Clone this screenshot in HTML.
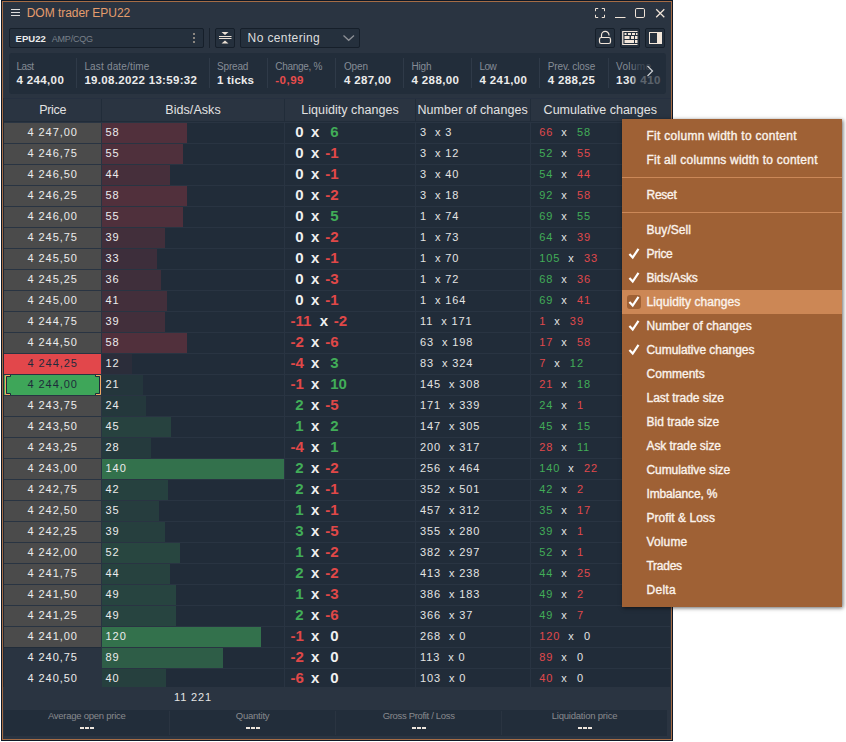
<!DOCTYPE html>
<html lang="en"><head><meta charset="utf-8"><title>DOM trader EPU22</title>
<style>
html,body{margin:0;padding:0;background:#fff;}
body{width:846px;height:742px;position:relative;overflow:hidden;font-family:'Liberation Sans', sans-serif;}
.g{position:absolute;left:0;top:0;}
.g>div,.g>span,.g>svg{position:absolute;display:block;}
.g>span{white-space:pre;}
</style></head><body>
<section class="g" id="frame">
<div style="left:1px;top:0px;width:672px;height:741px;background:#0f1826;"></div>
<div style="left:2px;top:1px;width:670px;height:739px;background:#a56c45;"></div>
<div style="left:3px;top:2px;width:668px;height:737px;background:#2a3441;"></div>
</section>
<section class="g" id="titlebar">
<div style="left:11px;top:9px;width:9px;height:1px;background:#dcdcdc;"></div>
<div style="left:11px;top:12px;width:9px;height:1px;background:#dcdcdc;"></div>
<div style="left:11px;top:15px;width:9px;height:1px;background:#dcdcdc;"></div>
<svg style="left:590px;top:4px" width="80" height="18" viewBox="590 4 80 18" fill="none" stroke="#f0e4d8" stroke-width="1">
<path d="M595.5 11.2V8.5H598.2 M601.8 8.5H604.5V11.2 M604.5 14.8V17.5H601.8 M598.2 17.5H595.5V14.8"/>
<path d="M615 17.5H625.5"/>
<rect x="635.5" y="8.5" width="9" height="9" rx="1.3"/>
<path d="M656.2 9.2L664.3 17.2M664.3 9.2L656.2 17.2" stroke-width="1.25"/>
</svg>
<span style="left:26.70px;top:7.20px;font:400 12px/12px 'Liberation Sans', sans-serif;color:#e59d6d;letter-spacing:-0.030px;">DOM trader EPU22</span>
</section>
<section class="g" id="toolbar">
<div style="left:9px;top:28px;width:195px;height:20px;background:#25303d;box-sizing:border-box;border:1px solid #161f2a;border-radius:2px;"></div>
<div style="left:193px;top:33px;width:2px;height:2px;background:#8b8680;"></div>
<div style="left:193px;top:37px;width:2px;height:2px;background:#8b8680;"></div>
<div style="left:193px;top:41px;width:2px;height:2px;background:#8b8680;"></div>
<div style="left:209px;top:28px;width:1px;height:20px;background:#1a232e;"></div>
<div style="left:215px;top:28px;width:20px;height:20px;background:#25303d;box-sizing:border-box;border:1px solid #161f2a;border-radius:2px;"></div>
<svg style="left:215px;top:28px" width="20" height="20" viewBox="215 28 20 20">
<path d="M221.5 32H228.5L225 35Z M221.5 43.5H228.5L225 40.5Z" fill="#eadfd4"/>
<path d="M219 36.5H231.5 M219 38.5H231.5" stroke="#eadfd4" stroke-width="1" fill="none"/>
</svg>
<div style="left:240px;top:28px;width:120px;height:20px;background:#25303d;box-sizing:border-box;border:1px solid #161f2a;border-radius:2px;"></div>
<svg style="left:340px;top:32px" width="18" height="12" viewBox="340 32 18 12"><path d="M343.5 35.5L348.7 40.3L354 35.5" stroke="#8d9096" stroke-width="1.3" fill="none"/></svg>
<div style="left:595px;top:28px;width:20px;height:20px;background:#25303d;box-sizing:border-box;border:1px solid #161f2a;border-radius:2px;"></div>
<div style="left:620px;top:28px;width:20px;height:20px;background:#25303d;box-sizing:border-box;border:1px solid #161f2a;border-radius:2px;"></div>
<div style="left:645px;top:28px;width:20px;height:20px;background:#25303d;box-sizing:border-box;border:1px solid #161f2a;border-radius:2px;"></div>
<svg style="left:595px;top:28px" width="70" height="20" viewBox="595 28 70 20" fill="none">
<rect x="599.5" y="37.5" width="11" height="6" rx="1.8" stroke="#f2e6da" stroke-width="1.2"/>
<path d="M601.5 37.5V35.2A3.75 3.75 0 0 1 609 35.2V35.6" stroke="#f2e6da" stroke-width="1.2"/>
<path d="M637.5 31.5H622.75V44.5H637.5" stroke="#f2e6da" stroke-width="1.2"/>
<path d="M624.5 33h2v2h-2z M628 33h3v2h-3z M632 33h3v2h-3z M636 33h1.5v2h-1.5z M624.5 36h5v3h-5z M631 36h3v3h-3z M635 36h2.5v3h-2.5z M624.5 40h9.5v3h-9.5z M635 40h2.5v3h-2.5z" fill="#f2e6da"/>
<rect x="649.5" y="32.5" width="12" height="11" stroke="#f2e6da"/>
<rect x="657" y="32" width="5" height="12" fill="#f2e6da"/>
</svg>
<span style="left:15.60px;top:34.00px;font:700 9.5px/9.5px 'Liberation Sans', sans-serif;color:#ececec;letter-spacing:0.023px;">EPU22</span>
<span style="left:51.70px;top:35.00px;font:400 9px/9px 'Liberation Sans', sans-serif;color:#79808a;letter-spacing:-0.186px;">AMP/CQG</span>
<span style="left:247.60px;top:32.00px;font:400 12px/12px 'Liberation Sans', sans-serif;color:#dedede;letter-spacing:0.378px;">No centering</span>
</section>
<section class="g" id="quote-info">
<div style="left:9px;top:53px;width:657px;height:41px;background:#222d3a;border-radius:3px;"></div>
<div style="left:76px;top:58px;width:1px;height:30px;background:#2f3a48;"></div>
<div style="left:209px;top:58px;width:1px;height:30px;background:#2f3a48;"></div>
<div style="left:267px;top:58px;width:1px;height:30px;background:#2f3a48;"></div>
<div style="left:335px;top:58px;width:1px;height:30px;background:#2f3a48;"></div>
<div style="left:403px;top:58px;width:1px;height:30px;background:#2f3a48;"></div>
<div style="left:471px;top:58px;width:1px;height:30px;background:#2f3a48;"></div>
<div style="left:539px;top:58px;width:1px;height:30px;background:#2f3a48;"></div>
<div style="left:608px;top:58px;width:1px;height:30px;background:#2f3a48;"></div>
<div style="left:630px;top:54px;width:36px;height:39px;background:linear-gradient(90deg,rgba(34,45,58,0) 0%,rgba(34,45,58,0.7) 25%,rgba(34,45,58,0.74) 100%);border-radius:0 3px 3px 0;z-index:3;"></div>
<svg style="left:644px;top:63px;z-index:4" width="12" height="16" viewBox="644 63 12 16"><path d="M647.5 66L652.5 71L647.5 76" stroke="#cfd2d6" stroke-width="1.2" fill="none"/></svg>
<span style="left:16.40px;top:62.00px;font:400 10px/10px 'Liberation Sans', sans-serif;color:#858c96;letter-spacing:-0.435px;">Last</span>
<span style="left:16.40px;top:75.00px;font:700 11.5px/11.5px 'Liberation Sans', sans-serif;color:#ececec;letter-spacing:0.376px;">4 244,00</span>
<span style="left:84.40px;top:62.00px;font:400 10px/10px 'Liberation Sans', sans-serif;color:#858c96;letter-spacing:0.168px;">Last date/time</span>
<span style="left:84.40px;top:75.00px;font:700 11.5px/11.5px 'Liberation Sans', sans-serif;color:#ececec;letter-spacing:0.322px;">19.08.2022 13:59:32</span>
<span style="left:217.00px;top:62.00px;font:400 10px/10px 'Liberation Sans', sans-serif;color:#858c96;letter-spacing:-0.170px;">Spread</span>
<span style="left:217.00px;top:75.00px;font:700 11.5px/11.5px 'Liberation Sans', sans-serif;color:#ececec;letter-spacing:0.198px;">1 ticks</span>
<span style="left:275.30px;top:62.00px;font:400 10px/10px 'Liberation Sans', sans-serif;color:#858c96;letter-spacing:-0.311px;">Change, %</span>
<span style="left:275.30px;top:75.00px;font:700 11.5px/11.5px 'Liberation Sans', sans-serif;color:#e84c4c;letter-spacing:0.495px;">-0,99</span>
<span style="left:344.00px;top:62.00px;font:400 10px/10px 'Liberation Sans', sans-serif;color:#858c96;letter-spacing:-0.156px;">Open</span>
<span style="left:344.00px;top:75.00px;font:700 11.5px/11.5px 'Liberation Sans', sans-serif;color:#ececec;letter-spacing:0.319px;">4 287,00</span>
<span style="left:411.50px;top:62.00px;font:400 10px/10px 'Liberation Sans', sans-serif;color:#858c96;letter-spacing:-0.193px;">High</span>
<span style="left:411.50px;top:75.00px;font:700 11.5px/11.5px 'Liberation Sans', sans-serif;color:#ececec;letter-spacing:0.376px;">4 288,00</span>
<span style="left:479.50px;top:62.00px;font:400 10px/10px 'Liberation Sans', sans-serif;color:#858c96;letter-spacing:-0.530px;">Low</span>
<span style="left:479.50px;top:75.00px;font:700 11.5px/11.5px 'Liberation Sans', sans-serif;color:#ececec;letter-spacing:0.376px;">4 241,00</span>
<span style="left:547.80px;top:62.00px;font:400 10px/10px 'Liberation Sans', sans-serif;color:#858c96;letter-spacing:-0.133px;">Prev. close</span>
<span style="left:547.80px;top:75.00px;font:700 11.5px/11.5px 'Liberation Sans', sans-serif;color:#ececec;letter-spacing:0.319px;">4 288,25</span>
<span style="left:616.00px;top:62.00px;font:400 10px/10px 'Liberation Sans', sans-serif;color:#858c96;letter-spacing:0.328px;">Volume</span>
<span style="left:616.00px;top:75.00px;font:700 11.5px/11.5px 'Liberation Sans', sans-serif;color:#ececec;letter-spacing:0.487px;">130 410</span>
</section>
<section class="g" id="dom-table">
<div style="left:3px;top:98px;width:668px;height:1px;background:#263040;"></div>
<div style="left:3px;top:121px;width:668px;height:1px;background:#212c39;"></div>
<div style="left:3px;top:122px;width:668px;height:1px;background:#293442;"></div>
<div style="left:101px;top:99px;width:1px;height:22px;background:#212c39;"></div>
<div style="left:284px;top:99px;width:1px;height:22px;background:#212c39;"></div>
<div style="left:415px;top:99px;width:1px;height:22px;background:#212c39;"></div>
<div style="left:530px;top:99px;width:1px;height:22px;background:#212c39;"></div>
<div style="left:3px;top:123px;width:667px;height:564px;background:#212c39;"></div>
<div style="left:4px;top:123px;width:97px;height:20px;background:#4b4b4b;"></div>
<div style="left:102px;top:123px;width:85px;height:20px;background:#51303c;"></div>
<div style="left:3px;top:143px;width:667px;height:1px;background:#293442;"></div>
<div style="left:4px;top:144px;width:97px;height:20px;background:#4b4b4b;"></div>
<div style="left:102px;top:144px;width:81px;height:20px;background:#4f303c;"></div>
<div style="left:3px;top:164px;width:667px;height:1px;background:#293442;"></div>
<div style="left:4px;top:165px;width:97px;height:20px;background:#4b4b4b;"></div>
<div style="left:102px;top:165px;width:68px;height:20px;background:#462f3b;"></div>
<div style="left:3px;top:185px;width:667px;height:1px;background:#293442;"></div>
<div style="left:4px;top:186px;width:97px;height:20px;background:#4b4b4b;"></div>
<div style="left:102px;top:186px;width:85px;height:20px;background:#51303c;"></div>
<div style="left:3px;top:206px;width:667px;height:1px;background:#293442;"></div>
<div style="left:4px;top:207px;width:97px;height:20px;background:#4b4b4b;"></div>
<div style="left:102px;top:207px;width:81px;height:20px;background:#4f303c;"></div>
<div style="left:3px;top:227px;width:667px;height:1px;background:#293442;"></div>
<div style="left:4px;top:228px;width:97px;height:20px;background:#4b4b4b;"></div>
<div style="left:102px;top:228px;width:63px;height:20px;background:#422f3b;"></div>
<div style="left:3px;top:248px;width:667px;height:1px;background:#293442;"></div>
<div style="left:4px;top:249px;width:97px;height:20px;background:#4b4b4b;"></div>
<div style="left:102px;top:249px;width:55px;height:20px;background:#3d2e3b;"></div>
<div style="left:3px;top:269px;width:667px;height:1px;background:#293442;"></div>
<div style="left:4px;top:270px;width:97px;height:20px;background:#4b4b4b;"></div>
<div style="left:102px;top:270px;width:59px;height:20px;background:#3f2f3b;"></div>
<div style="left:3px;top:290px;width:667px;height:1px;background:#293442;"></div>
<div style="left:4px;top:291px;width:97px;height:20px;background:#4b4b4b;"></div>
<div style="left:102px;top:291px;width:65px;height:20px;background:#432f3b;"></div>
<div style="left:3px;top:311px;width:667px;height:1px;background:#293442;"></div>
<div style="left:4px;top:312px;width:97px;height:20px;background:#4b4b4b;"></div>
<div style="left:102px;top:312px;width:63px;height:20px;background:#422f3b;"></div>
<div style="left:3px;top:332px;width:667px;height:1px;background:#293442;"></div>
<div style="left:4px;top:333px;width:97px;height:20px;background:#4b4b4b;"></div>
<div style="left:102px;top:333px;width:85px;height:20px;background:#51303c;"></div>
<div style="left:3px;top:353px;width:667px;height:1px;background:#293442;"></div>
<div style="left:4px;top:354px;width:97px;height:20px;background:#e2474b;"></div>
<div style="left:102px;top:354px;width:30px;height:20px;background:#2b2d3a;"></div>
<div style="left:3px;top:374px;width:667px;height:1px;background:#293442;"></div>
<div style="left:4px;top:375px;width:97px;height:20px;background:#3ea659;"></div>
<div style="left:102px;top:375px;width:41px;height:20px;background:#24363c;"></div>
<div style="left:3px;top:395px;width:667px;height:1px;background:#293442;"></div>
<div style="left:4px;top:396px;width:97px;height:20px;background:#4b4b4b;"></div>
<div style="left:102px;top:396px;width:44px;height:20px;background:#24383c;"></div>
<div style="left:3px;top:416px;width:667px;height:1px;background:#293442;"></div>
<div style="left:4px;top:417px;width:97px;height:20px;background:#4b4b4b;"></div>
<div style="left:102px;top:417px;width:69px;height:20px;background:#27423f;"></div>
<div style="left:3px;top:437px;width:667px;height:1px;background:#293442;"></div>
<div style="left:4px;top:438px;width:97px;height:20px;background:#4b4b4b;"></div>
<div style="left:102px;top:438px;width:49px;height:20px;background:#253a3d;"></div>
<div style="left:3px;top:458px;width:667px;height:1px;background:#293442;"></div>
<div style="left:4px;top:459px;width:97px;height:20px;background:#4b4b4b;"></div>
<div style="left:102px;top:459px;width:182px;height:20px;background:#33714c;"></div>
<div style="left:3px;top:479px;width:667px;height:1px;background:#293442;"></div>
<div style="left:4px;top:480px;width:97px;height:20px;background:#4b4b4b;"></div>
<div style="left:102px;top:480px;width:66px;height:20px;background:#26413f;"></div>
<div style="left:3px;top:500px;width:667px;height:1px;background:#293442;"></div>
<div style="left:4px;top:501px;width:97px;height:20px;background:#4b4b4b;"></div>
<div style="left:102px;top:501px;width:57px;height:20px;background:#263d3e;"></div>
<div style="left:3px;top:521px;width:667px;height:1px;background:#293442;"></div>
<div style="left:4px;top:522px;width:97px;height:20px;background:#4b4b4b;"></div>
<div style="left:102px;top:522px;width:63px;height:20px;background:#263f3e;"></div>
<div style="left:3px;top:542px;width:667px;height:1px;background:#293442;"></div>
<div style="left:4px;top:543px;width:97px;height:20px;background:#4b4b4b;"></div>
<div style="left:102px;top:543px;width:78px;height:20px;background:#284640;"></div>
<div style="left:3px;top:563px;width:667px;height:1px;background:#293442;"></div>
<div style="left:4px;top:564px;width:97px;height:20px;background:#4b4b4b;"></div>
<div style="left:102px;top:564px;width:68px;height:20px;background:#27423f;"></div>
<div style="left:3px;top:584px;width:667px;height:1px;background:#293442;"></div>
<div style="left:4px;top:585px;width:97px;height:20px;background:#4b4b4b;"></div>
<div style="left:102px;top:585px;width:74px;height:20px;background:#274440;"></div>
<div style="left:3px;top:605px;width:667px;height:1px;background:#293442;"></div>
<div style="left:4px;top:606px;width:97px;height:20px;background:#4b4b4b;"></div>
<div style="left:102px;top:606px;width:74px;height:20px;background:#274440;"></div>
<div style="left:3px;top:626px;width:667px;height:1px;background:#293442;"></div>
<div style="left:4px;top:627px;width:97px;height:20px;background:#4b4b4b;"></div>
<div style="left:102px;top:627px;width:159px;height:20px;background:#33714c;"></div>
<div style="left:102px;top:647px;width:568px;height:1px;background:#293442;"></div>
<div style="left:4px;top:648px;width:97px;height:21px;background:#2a3441;"></div>
<div style="left:102px;top:648px;width:121px;height:20px;background:#2e5d47;"></div>
<div style="left:102px;top:668px;width:568px;height:1px;background:#293442;"></div>
<div style="left:4px;top:669px;width:97px;height:18px;background:#2a3441;"></div>
<div style="left:102px;top:669px;width:64px;height:18px;background:#26403e;"></div>
<div style="left:3px;top:98px;width:1px;height:589px;background:#1f2a37;"></div>
<div style="left:101px;top:123px;width:1px;height:564px;background:#293442;"></div>
<div style="left:284px;top:123px;width:1px;height:564px;background:#293442;"></div>
<div style="left:415px;top:123px;width:1px;height:564px;background:#293442;"></div>
<div style="left:530px;top:123px;width:1px;height:564px;background:#293442;"></div>
<svg style="left:0px;top:375px" width="104" height="20" viewBox="0 0 104 20" fill="none" stroke-width="1"><path d="M10.5 0V1.5H6.5V18.5H10.5V20 M95.5 0V1.5H99.5V18.5H95.5V20" stroke="#1f2b3a"/><path d="M10 0.5H5.5V19.5H10 M96 0.5H100.5V19.5H96" stroke="#f4a866"/></svg>
<div style="left:3px;top:687px;width:668px;height:23px;background:#2a3441;"></div>
<span style="left:39.20px;top:104.20px;font:400 12.5px/12.5px 'Liberation Sans', sans-serif;color:#e2e2e2;letter-spacing:-0.321px;">Price</span>
<span style="left:165.30px;top:104.20px;font:400 12.5px/12.5px 'Liberation Sans', sans-serif;color:#e2e2e2;letter-spacing:0.064px;">Bids/Asks</span>
<span style="left:301.30px;top:104.20px;font:400 12.5px/12.5px 'Liberation Sans', sans-serif;color:#e2e2e2;letter-spacing:0.049px;">Liquidity changes</span>
<span style="left:417.50px;top:104.20px;font:400 12.5px/12.5px 'Liberation Sans', sans-serif;color:#e2e2e2;letter-spacing:0.069px;">Number of changes</span>
<span style="left:543.60px;top:104.20px;font:400 12.5px/12.5px 'Liberation Sans', sans-serif;color:#e2e2e2;letter-spacing:0.008px;">Cumulative changes</span>
<span style="left:27.50px;top:127.00px;font:400 11px/11px 'Liberation Sans', sans-serif;color:#ececec;letter-spacing:0.939px;">4 247,00</span>
<span style="left:105.60px;top:127.00px;font:400 11px/11px 'Liberation Sans', sans-serif;color:#ececec;letter-spacing:0.900px;">58</span>
<span style="left:291.20px;top:124.00px;font:700 15px/15px 'Liberation Sans', sans-serif;color:#f0f0f0;"> 0</span>
<span style="left:311.10px;top:124.00px;font:700 15px/15px 'Liberation Sans', sans-serif;color:#f0f0f0;">x</span>
<span style="left:326.00px;top:124.00px;font:700 15px/15px 'Liberation Sans', sans-serif;color:#41ad58;"> 6</span>
<span style="left:420.00px;top:127.00px;font:400 11px/11px 'Liberation Sans', sans-serif;color:#e4e4e4;letter-spacing:0.900px;">3  x 3</span>
<span style="left:539.30px;top:127.00px;font:400 11px/11px 'Liberation Sans', sans-serif;color:#e4e4e4;letter-spacing:0.900px;"><span style="color:#e0494c">66</span>  x  <span style="color:#41ad58;margin-left:1.3px">58</span></span>
<span style="left:27.50px;top:148.00px;font:400 11px/11px 'Liberation Sans', sans-serif;color:#ececec;letter-spacing:0.939px;">4 246,75</span>
<span style="left:105.60px;top:148.00px;font:400 11px/11px 'Liberation Sans', sans-serif;color:#ececec;letter-spacing:0.900px;">55</span>
<span style="left:291.20px;top:145.00px;font:700 15px/15px 'Liberation Sans', sans-serif;color:#f0f0f0;"> 0</span>
<span style="left:311.10px;top:145.00px;font:700 15px/15px 'Liberation Sans', sans-serif;color:#f0f0f0;">x</span>
<span style="left:325.20px;top:145.00px;font:700 15px/15px 'Liberation Sans', sans-serif;color:#e04848;">-1</span>
<span style="left:420.00px;top:148.00px;font:400 11px/11px 'Liberation Sans', sans-serif;color:#e4e4e4;letter-spacing:0.900px;">3  x 12</span>
<span style="left:539.30px;top:148.00px;font:400 11px/11px 'Liberation Sans', sans-serif;color:#e4e4e4;letter-spacing:0.900px;"><span style="color:#41ad58">52</span>  x  <span style="color:#e0494c;margin-left:1.3px">55</span></span>
<span style="left:27.50px;top:169.00px;font:400 11px/11px 'Liberation Sans', sans-serif;color:#ececec;letter-spacing:0.939px;">4 246,50</span>
<span style="left:105.60px;top:169.00px;font:400 11px/11px 'Liberation Sans', sans-serif;color:#ececec;letter-spacing:0.900px;">44</span>
<span style="left:291.20px;top:166.00px;font:700 15px/15px 'Liberation Sans', sans-serif;color:#f0f0f0;"> 0</span>
<span style="left:311.10px;top:166.00px;font:700 15px/15px 'Liberation Sans', sans-serif;color:#f0f0f0;">x</span>
<span style="left:325.20px;top:166.00px;font:700 15px/15px 'Liberation Sans', sans-serif;color:#e04848;">-1</span>
<span style="left:420.00px;top:169.00px;font:400 11px/11px 'Liberation Sans', sans-serif;color:#e4e4e4;letter-spacing:0.900px;">3  x 40</span>
<span style="left:539.30px;top:169.00px;font:400 11px/11px 'Liberation Sans', sans-serif;color:#e4e4e4;letter-spacing:0.900px;"><span style="color:#41ad58">54</span>  x  <span style="color:#e0494c;margin-left:1.3px">44</span></span>
<span style="left:27.50px;top:190.00px;font:400 11px/11px 'Liberation Sans', sans-serif;color:#ececec;letter-spacing:0.939px;">4 246,25</span>
<span style="left:105.60px;top:190.00px;font:400 11px/11px 'Liberation Sans', sans-serif;color:#ececec;letter-spacing:0.900px;">58</span>
<span style="left:291.20px;top:187.00px;font:700 15px/15px 'Liberation Sans', sans-serif;color:#f0f0f0;"> 0</span>
<span style="left:311.10px;top:187.00px;font:700 15px/15px 'Liberation Sans', sans-serif;color:#f0f0f0;">x</span>
<span style="left:325.20px;top:187.00px;font:700 15px/15px 'Liberation Sans', sans-serif;color:#e04848;">-2</span>
<span style="left:420.00px;top:190.00px;font:400 11px/11px 'Liberation Sans', sans-serif;color:#e4e4e4;letter-spacing:0.900px;">3  x 18</span>
<span style="left:539.30px;top:190.00px;font:400 11px/11px 'Liberation Sans', sans-serif;color:#e4e4e4;letter-spacing:0.900px;"><span style="color:#41ad58">92</span>  x  <span style="color:#e0494c;margin-left:1.3px">58</span></span>
<span style="left:27.50px;top:211.00px;font:400 11px/11px 'Liberation Sans', sans-serif;color:#ececec;letter-spacing:0.939px;">4 246,00</span>
<span style="left:105.60px;top:211.00px;font:400 11px/11px 'Liberation Sans', sans-serif;color:#ececec;letter-spacing:0.900px;">55</span>
<span style="left:291.20px;top:208.00px;font:700 15px/15px 'Liberation Sans', sans-serif;color:#f0f0f0;"> 0</span>
<span style="left:311.10px;top:208.00px;font:700 15px/15px 'Liberation Sans', sans-serif;color:#f0f0f0;">x</span>
<span style="left:326.00px;top:208.00px;font:700 15px/15px 'Liberation Sans', sans-serif;color:#41ad58;"> 5</span>
<span style="left:420.00px;top:211.00px;font:400 11px/11px 'Liberation Sans', sans-serif;color:#e4e4e4;letter-spacing:0.900px;">1  x 74</span>
<span style="left:539.30px;top:211.00px;font:400 11px/11px 'Liberation Sans', sans-serif;color:#e4e4e4;letter-spacing:0.900px;"><span style="color:#41ad58">69</span>  x  <span style="color:#41ad58;margin-left:1.3px">55</span></span>
<span style="left:27.50px;top:232.00px;font:400 11px/11px 'Liberation Sans', sans-serif;color:#ececec;letter-spacing:0.939px;">4 245,75</span>
<span style="left:105.60px;top:232.00px;font:400 11px/11px 'Liberation Sans', sans-serif;color:#ececec;letter-spacing:0.900px;">39</span>
<span style="left:291.20px;top:229.00px;font:700 15px/15px 'Liberation Sans', sans-serif;color:#f0f0f0;"> 0</span>
<span style="left:311.10px;top:229.00px;font:700 15px/15px 'Liberation Sans', sans-serif;color:#f0f0f0;">x</span>
<span style="left:325.20px;top:229.00px;font:700 15px/15px 'Liberation Sans', sans-serif;color:#e04848;">-2</span>
<span style="left:420.00px;top:232.00px;font:400 11px/11px 'Liberation Sans', sans-serif;color:#e4e4e4;letter-spacing:0.900px;">1  x 73</span>
<span style="left:539.30px;top:232.00px;font:400 11px/11px 'Liberation Sans', sans-serif;color:#e4e4e4;letter-spacing:0.900px;"><span style="color:#41ad58">64</span>  x  <span style="color:#e0494c;margin-left:1.3px">39</span></span>
<span style="left:27.50px;top:253.00px;font:400 11px/11px 'Liberation Sans', sans-serif;color:#ececec;letter-spacing:0.939px;">4 245,50</span>
<span style="left:105.60px;top:253.00px;font:400 11px/11px 'Liberation Sans', sans-serif;color:#ececec;letter-spacing:0.900px;">33</span>
<span style="left:291.20px;top:250.00px;font:700 15px/15px 'Liberation Sans', sans-serif;color:#f0f0f0;"> 0</span>
<span style="left:311.10px;top:250.00px;font:700 15px/15px 'Liberation Sans', sans-serif;color:#f0f0f0;">x</span>
<span style="left:325.20px;top:250.00px;font:700 15px/15px 'Liberation Sans', sans-serif;color:#e04848;">-1</span>
<span style="left:420.00px;top:253.00px;font:400 11px/11px 'Liberation Sans', sans-serif;color:#e4e4e4;letter-spacing:0.900px;">1  x 70</span>
<span style="left:539.30px;top:253.00px;font:400 11px/11px 'Liberation Sans', sans-serif;color:#e4e4e4;letter-spacing:0.900px;"><span style="color:#41ad58">105</span>  x  <span style="color:#e0494c;margin-left:1.3px">33</span></span>
<span style="left:27.50px;top:274.00px;font:400 11px/11px 'Liberation Sans', sans-serif;color:#ececec;letter-spacing:0.939px;">4 245,25</span>
<span style="left:105.60px;top:274.00px;font:400 11px/11px 'Liberation Sans', sans-serif;color:#ececec;letter-spacing:0.900px;">36</span>
<span style="left:291.20px;top:271.00px;font:700 15px/15px 'Liberation Sans', sans-serif;color:#f0f0f0;"> 0</span>
<span style="left:311.10px;top:271.00px;font:700 15px/15px 'Liberation Sans', sans-serif;color:#f0f0f0;">x</span>
<span style="left:325.20px;top:271.00px;font:700 15px/15px 'Liberation Sans', sans-serif;color:#e04848;">-3</span>
<span style="left:420.00px;top:274.00px;font:400 11px/11px 'Liberation Sans', sans-serif;color:#e4e4e4;letter-spacing:0.900px;">1  x 72</span>
<span style="left:539.30px;top:274.00px;font:400 11px/11px 'Liberation Sans', sans-serif;color:#e4e4e4;letter-spacing:0.900px;"><span style="color:#41ad58">68</span>  x  <span style="color:#e0494c;margin-left:1.3px">36</span></span>
<span style="left:27.50px;top:295.00px;font:400 11px/11px 'Liberation Sans', sans-serif;color:#ececec;letter-spacing:0.939px;">4 245,00</span>
<span style="left:105.60px;top:295.00px;font:400 11px/11px 'Liberation Sans', sans-serif;color:#ececec;letter-spacing:0.900px;">41</span>
<span style="left:291.20px;top:292.00px;font:700 15px/15px 'Liberation Sans', sans-serif;color:#f0f0f0;"> 0</span>
<span style="left:311.10px;top:292.00px;font:700 15px/15px 'Liberation Sans', sans-serif;color:#f0f0f0;">x</span>
<span style="left:325.20px;top:292.00px;font:700 15px/15px 'Liberation Sans', sans-serif;color:#e04848;">-1</span>
<span style="left:420.00px;top:295.00px;font:400 11px/11px 'Liberation Sans', sans-serif;color:#e4e4e4;letter-spacing:0.900px;">1  x 164</span>
<span style="left:539.30px;top:295.00px;font:400 11px/11px 'Liberation Sans', sans-serif;color:#e4e4e4;letter-spacing:0.900px;"><span style="color:#41ad58">69</span>  x  <span style="color:#e0494c;margin-left:1.3px">41</span></span>
<span style="left:27.50px;top:316.00px;font:400 11px/11px 'Liberation Sans', sans-serif;color:#ececec;letter-spacing:0.939px;">4 244,75</span>
<span style="left:105.60px;top:316.00px;font:400 11px/11px 'Liberation Sans', sans-serif;color:#ececec;letter-spacing:0.900px;">39</span>
<span style="left:290.40px;top:313.00px;font:700 15px/15px 'Liberation Sans', sans-serif;color:#e04848;">-11</span>
<span style="left:319.70px;top:313.00px;font:700 15px/15px 'Liberation Sans', sans-serif;color:#f0f0f0;">x</span>
<span style="left:333.80px;top:313.00px;font:700 15px/15px 'Liberation Sans', sans-serif;color:#e04848;">-2</span>
<span style="left:420.00px;top:316.00px;font:400 11px/11px 'Liberation Sans', sans-serif;color:#e4e4e4;letter-spacing:0.900px;">11  x 171</span>
<span style="left:539.30px;top:316.00px;font:400 11px/11px 'Liberation Sans', sans-serif;color:#e4e4e4;letter-spacing:0.900px;"><span style="color:#e0494c">1</span>  x  <span style="color:#e0494c;margin-left:1.3px">39</span></span>
<span style="left:27.50px;top:337.00px;font:400 11px/11px 'Liberation Sans', sans-serif;color:#ececec;letter-spacing:0.939px;">4 244,50</span>
<span style="left:105.60px;top:337.00px;font:400 11px/11px 'Liberation Sans', sans-serif;color:#ececec;letter-spacing:0.900px;">58</span>
<span style="left:290.40px;top:334.00px;font:700 15px/15px 'Liberation Sans', sans-serif;color:#e04848;">-2</span>
<span style="left:311.10px;top:334.00px;font:700 15px/15px 'Liberation Sans', sans-serif;color:#f0f0f0;">x</span>
<span style="left:325.20px;top:334.00px;font:700 15px/15px 'Liberation Sans', sans-serif;color:#e04848;">-6</span>
<span style="left:420.00px;top:337.00px;font:400 11px/11px 'Liberation Sans', sans-serif;color:#e4e4e4;letter-spacing:0.900px;">63  x 198</span>
<span style="left:539.30px;top:337.00px;font:400 11px/11px 'Liberation Sans', sans-serif;color:#e4e4e4;letter-spacing:0.900px;"><span style="color:#e0494c">17</span>  x  <span style="color:#e0494c;margin-left:1.3px">58</span></span>
<span style="left:27.50px;top:358.00px;font:400 11px/11px 'Liberation Sans', sans-serif;color:#1e2b3b;letter-spacing:0.939px;">4 244,25</span>
<span style="left:105.60px;top:358.00px;font:400 11px/11px 'Liberation Sans', sans-serif;color:#ececec;letter-spacing:0.900px;">12</span>
<span style="left:290.40px;top:355.00px;font:700 15px/15px 'Liberation Sans', sans-serif;color:#e04848;">-4</span>
<span style="left:311.10px;top:355.00px;font:700 15px/15px 'Liberation Sans', sans-serif;color:#f0f0f0;">x</span>
<span style="left:326.00px;top:355.00px;font:700 15px/15px 'Liberation Sans', sans-serif;color:#41ad58;"> 3</span>
<span style="left:420.00px;top:358.00px;font:400 11px/11px 'Liberation Sans', sans-serif;color:#e4e4e4;letter-spacing:0.900px;">83  x 324</span>
<span style="left:539.30px;top:358.00px;font:400 11px/11px 'Liberation Sans', sans-serif;color:#e4e4e4;letter-spacing:0.900px;"><span style="color:#e0494c">7</span>  x  <span style="color:#41ad58;margin-left:1.3px">12</span></span>
<span style="left:27.50px;top:379.00px;font:400 11px/11px 'Liberation Sans', sans-serif;color:#1e2b3b;letter-spacing:0.939px;">4 244,00</span>
<span style="left:105.60px;top:379.00px;font:400 11px/11px 'Liberation Sans', sans-serif;color:#ececec;letter-spacing:0.900px;">21</span>
<span style="left:290.40px;top:376.00px;font:700 15px/15px 'Liberation Sans', sans-serif;color:#e04848;">-1</span>
<span style="left:311.10px;top:376.00px;font:700 15px/15px 'Liberation Sans', sans-serif;color:#f0f0f0;">x</span>
<span style="left:326.00px;top:376.00px;font:700 15px/15px 'Liberation Sans', sans-serif;color:#41ad58;"> 10</span>
<span style="left:420.00px;top:379.00px;font:400 11px/11px 'Liberation Sans', sans-serif;color:#e4e4e4;letter-spacing:0.900px;">145  x 308</span>
<span style="left:539.30px;top:379.00px;font:400 11px/11px 'Liberation Sans', sans-serif;color:#e4e4e4;letter-spacing:0.900px;"><span style="color:#e0494c">21</span>  x  <span style="color:#41ad58;margin-left:1.3px">18</span></span>
<span style="left:27.50px;top:400.00px;font:400 11px/11px 'Liberation Sans', sans-serif;color:#ececec;letter-spacing:0.939px;">4 243,75</span>
<span style="left:105.60px;top:400.00px;font:400 11px/11px 'Liberation Sans', sans-serif;color:#ececec;letter-spacing:0.900px;">24</span>
<span style="left:291.20px;top:397.00px;font:700 15px/15px 'Liberation Sans', sans-serif;color:#41ad58;"> 2</span>
<span style="left:311.10px;top:397.00px;font:700 15px/15px 'Liberation Sans', sans-serif;color:#f0f0f0;">x</span>
<span style="left:325.20px;top:397.00px;font:700 15px/15px 'Liberation Sans', sans-serif;color:#e04848;">-5</span>
<span style="left:420.00px;top:400.00px;font:400 11px/11px 'Liberation Sans', sans-serif;color:#e4e4e4;letter-spacing:0.900px;">171  x 339</span>
<span style="left:539.30px;top:400.00px;font:400 11px/11px 'Liberation Sans', sans-serif;color:#e4e4e4;letter-spacing:0.900px;"><span style="color:#41ad58">24</span>  x  <span style="color:#e0494c;margin-left:1.3px">1</span></span>
<span style="left:27.50px;top:421.00px;font:400 11px/11px 'Liberation Sans', sans-serif;color:#ececec;letter-spacing:0.939px;">4 243,50</span>
<span style="left:105.60px;top:421.00px;font:400 11px/11px 'Liberation Sans', sans-serif;color:#ececec;letter-spacing:0.900px;">45</span>
<span style="left:291.20px;top:418.00px;font:700 15px/15px 'Liberation Sans', sans-serif;color:#41ad58;"> 1</span>
<span style="left:311.10px;top:418.00px;font:700 15px/15px 'Liberation Sans', sans-serif;color:#f0f0f0;">x</span>
<span style="left:326.00px;top:418.00px;font:700 15px/15px 'Liberation Sans', sans-serif;color:#41ad58;"> 2</span>
<span style="left:420.00px;top:421.00px;font:400 11px/11px 'Liberation Sans', sans-serif;color:#e4e4e4;letter-spacing:0.900px;">147  x 305</span>
<span style="left:539.30px;top:421.00px;font:400 11px/11px 'Liberation Sans', sans-serif;color:#e4e4e4;letter-spacing:0.900px;"><span style="color:#41ad58">45</span>  x  <span style="color:#41ad58;margin-left:1.3px">15</span></span>
<span style="left:27.50px;top:442.00px;font:400 11px/11px 'Liberation Sans', sans-serif;color:#ececec;letter-spacing:0.939px;">4 243,25</span>
<span style="left:105.60px;top:442.00px;font:400 11px/11px 'Liberation Sans', sans-serif;color:#ececec;letter-spacing:0.900px;">28</span>
<span style="left:290.40px;top:439.00px;font:700 15px/15px 'Liberation Sans', sans-serif;color:#e04848;">-4</span>
<span style="left:311.10px;top:439.00px;font:700 15px/15px 'Liberation Sans', sans-serif;color:#f0f0f0;">x</span>
<span style="left:326.00px;top:439.00px;font:700 15px/15px 'Liberation Sans', sans-serif;color:#41ad58;"> 1</span>
<span style="left:420.00px;top:442.00px;font:400 11px/11px 'Liberation Sans', sans-serif;color:#e4e4e4;letter-spacing:0.900px;">200  x 317</span>
<span style="left:539.30px;top:442.00px;font:400 11px/11px 'Liberation Sans', sans-serif;color:#e4e4e4;letter-spacing:0.900px;"><span style="color:#e0494c">28</span>  x  <span style="color:#41ad58;margin-left:1.3px">11</span></span>
<span style="left:27.50px;top:463.00px;font:400 11px/11px 'Liberation Sans', sans-serif;color:#ececec;letter-spacing:0.939px;">4 243,00</span>
<span style="left:105.60px;top:463.00px;font:400 11px/11px 'Liberation Sans', sans-serif;color:#ececec;letter-spacing:0.900px;">140</span>
<span style="left:291.20px;top:460.00px;font:700 15px/15px 'Liberation Sans', sans-serif;color:#41ad58;"> 2</span>
<span style="left:311.10px;top:460.00px;font:700 15px/15px 'Liberation Sans', sans-serif;color:#f0f0f0;">x</span>
<span style="left:325.20px;top:460.00px;font:700 15px/15px 'Liberation Sans', sans-serif;color:#e04848;">-2</span>
<span style="left:420.00px;top:463.00px;font:400 11px/11px 'Liberation Sans', sans-serif;color:#e4e4e4;letter-spacing:0.900px;">256  x 464</span>
<span style="left:539.30px;top:463.00px;font:400 11px/11px 'Liberation Sans', sans-serif;color:#e4e4e4;letter-spacing:0.900px;"><span style="color:#41ad58">140</span>  x  <span style="color:#e0494c;margin-left:1.3px">22</span></span>
<span style="left:27.50px;top:484.00px;font:400 11px/11px 'Liberation Sans', sans-serif;color:#ececec;letter-spacing:0.939px;">4 242,75</span>
<span style="left:105.60px;top:484.00px;font:400 11px/11px 'Liberation Sans', sans-serif;color:#ececec;letter-spacing:0.900px;">42</span>
<span style="left:291.20px;top:481.00px;font:700 15px/15px 'Liberation Sans', sans-serif;color:#41ad58;"> 2</span>
<span style="left:311.10px;top:481.00px;font:700 15px/15px 'Liberation Sans', sans-serif;color:#f0f0f0;">x</span>
<span style="left:325.20px;top:481.00px;font:700 15px/15px 'Liberation Sans', sans-serif;color:#e04848;">-1</span>
<span style="left:420.00px;top:484.00px;font:400 11px/11px 'Liberation Sans', sans-serif;color:#e4e4e4;letter-spacing:0.900px;">352  x 501</span>
<span style="left:539.30px;top:484.00px;font:400 11px/11px 'Liberation Sans', sans-serif;color:#e4e4e4;letter-spacing:0.900px;"><span style="color:#41ad58">42</span>  x  <span style="color:#e0494c;margin-left:1.3px">2</span></span>
<span style="left:27.50px;top:505.00px;font:400 11px/11px 'Liberation Sans', sans-serif;color:#ececec;letter-spacing:0.939px;">4 242,50</span>
<span style="left:105.60px;top:505.00px;font:400 11px/11px 'Liberation Sans', sans-serif;color:#ececec;letter-spacing:0.900px;">35</span>
<span style="left:291.20px;top:502.00px;font:700 15px/15px 'Liberation Sans', sans-serif;color:#41ad58;"> 1</span>
<span style="left:311.10px;top:502.00px;font:700 15px/15px 'Liberation Sans', sans-serif;color:#f0f0f0;">x</span>
<span style="left:325.20px;top:502.00px;font:700 15px/15px 'Liberation Sans', sans-serif;color:#e04848;">-1</span>
<span style="left:420.00px;top:505.00px;font:400 11px/11px 'Liberation Sans', sans-serif;color:#e4e4e4;letter-spacing:0.900px;">457  x 312</span>
<span style="left:539.30px;top:505.00px;font:400 11px/11px 'Liberation Sans', sans-serif;color:#e4e4e4;letter-spacing:0.900px;"><span style="color:#41ad58">35</span>  x  <span style="color:#e0494c;margin-left:1.3px">17</span></span>
<span style="left:27.50px;top:526.00px;font:400 11px/11px 'Liberation Sans', sans-serif;color:#ececec;letter-spacing:0.939px;">4 242,25</span>
<span style="left:105.60px;top:526.00px;font:400 11px/11px 'Liberation Sans', sans-serif;color:#ececec;letter-spacing:0.900px;">39</span>
<span style="left:291.20px;top:523.00px;font:700 15px/15px 'Liberation Sans', sans-serif;color:#41ad58;"> 3</span>
<span style="left:311.10px;top:523.00px;font:700 15px/15px 'Liberation Sans', sans-serif;color:#f0f0f0;">x</span>
<span style="left:325.20px;top:523.00px;font:700 15px/15px 'Liberation Sans', sans-serif;color:#e04848;">-5</span>
<span style="left:420.00px;top:526.00px;font:400 11px/11px 'Liberation Sans', sans-serif;color:#e4e4e4;letter-spacing:0.900px;">355  x 280</span>
<span style="left:539.30px;top:526.00px;font:400 11px/11px 'Liberation Sans', sans-serif;color:#e4e4e4;letter-spacing:0.900px;"><span style="color:#41ad58">39</span>  x  <span style="color:#e0494c;margin-left:1.3px">1</span></span>
<span style="left:27.50px;top:547.00px;font:400 11px/11px 'Liberation Sans', sans-serif;color:#ececec;letter-spacing:0.939px;">4 242,00</span>
<span style="left:105.60px;top:547.00px;font:400 11px/11px 'Liberation Sans', sans-serif;color:#ececec;letter-spacing:0.900px;">52</span>
<span style="left:291.20px;top:544.00px;font:700 15px/15px 'Liberation Sans', sans-serif;color:#41ad58;"> 1</span>
<span style="left:311.10px;top:544.00px;font:700 15px/15px 'Liberation Sans', sans-serif;color:#f0f0f0;">x</span>
<span style="left:325.20px;top:544.00px;font:700 15px/15px 'Liberation Sans', sans-serif;color:#e04848;">-2</span>
<span style="left:420.00px;top:547.00px;font:400 11px/11px 'Liberation Sans', sans-serif;color:#e4e4e4;letter-spacing:0.900px;">382  x 297</span>
<span style="left:539.30px;top:547.00px;font:400 11px/11px 'Liberation Sans', sans-serif;color:#e4e4e4;letter-spacing:0.900px;"><span style="color:#41ad58">52</span>  x  <span style="color:#e0494c;margin-left:1.3px">1</span></span>
<span style="left:27.50px;top:568.00px;font:400 11px/11px 'Liberation Sans', sans-serif;color:#ececec;letter-spacing:0.939px;">4 241,75</span>
<span style="left:105.60px;top:568.00px;font:400 11px/11px 'Liberation Sans', sans-serif;color:#ececec;letter-spacing:0.900px;">44</span>
<span style="left:291.20px;top:565.00px;font:700 15px/15px 'Liberation Sans', sans-serif;color:#41ad58;"> 2</span>
<span style="left:311.10px;top:565.00px;font:700 15px/15px 'Liberation Sans', sans-serif;color:#f0f0f0;">x</span>
<span style="left:325.20px;top:565.00px;font:700 15px/15px 'Liberation Sans', sans-serif;color:#e04848;">-2</span>
<span style="left:420.00px;top:568.00px;font:400 11px/11px 'Liberation Sans', sans-serif;color:#e4e4e4;letter-spacing:0.900px;">413  x 238</span>
<span style="left:539.30px;top:568.00px;font:400 11px/11px 'Liberation Sans', sans-serif;color:#e4e4e4;letter-spacing:0.900px;"><span style="color:#41ad58">44</span>  x  <span style="color:#e0494c;margin-left:1.3px">25</span></span>
<span style="left:27.50px;top:589.00px;font:400 11px/11px 'Liberation Sans', sans-serif;color:#ececec;letter-spacing:0.939px;">4 241,50</span>
<span style="left:105.60px;top:589.00px;font:400 11px/11px 'Liberation Sans', sans-serif;color:#ececec;letter-spacing:0.900px;">49</span>
<span style="left:291.20px;top:586.00px;font:700 15px/15px 'Liberation Sans', sans-serif;color:#41ad58;"> 1</span>
<span style="left:311.10px;top:586.00px;font:700 15px/15px 'Liberation Sans', sans-serif;color:#f0f0f0;">x</span>
<span style="left:325.20px;top:586.00px;font:700 15px/15px 'Liberation Sans', sans-serif;color:#e04848;">-3</span>
<span style="left:420.00px;top:589.00px;font:400 11px/11px 'Liberation Sans', sans-serif;color:#e4e4e4;letter-spacing:0.900px;">386  x 183</span>
<span style="left:539.30px;top:589.00px;font:400 11px/11px 'Liberation Sans', sans-serif;color:#e4e4e4;letter-spacing:0.900px;"><span style="color:#41ad58">49</span>  x  <span style="color:#e0494c;margin-left:1.3px">2</span></span>
<span style="left:27.50px;top:610.00px;font:400 11px/11px 'Liberation Sans', sans-serif;color:#ececec;letter-spacing:0.939px;">4 241,25</span>
<span style="left:105.60px;top:610.00px;font:400 11px/11px 'Liberation Sans', sans-serif;color:#ececec;letter-spacing:0.900px;">49</span>
<span style="left:291.20px;top:607.00px;font:700 15px/15px 'Liberation Sans', sans-serif;color:#41ad58;"> 2</span>
<span style="left:311.10px;top:607.00px;font:700 15px/15px 'Liberation Sans', sans-serif;color:#f0f0f0;">x</span>
<span style="left:325.20px;top:607.00px;font:700 15px/15px 'Liberation Sans', sans-serif;color:#e04848;">-6</span>
<span style="left:420.00px;top:610.00px;font:400 11px/11px 'Liberation Sans', sans-serif;color:#e4e4e4;letter-spacing:0.900px;">366  x 37</span>
<span style="left:539.30px;top:610.00px;font:400 11px/11px 'Liberation Sans', sans-serif;color:#e4e4e4;letter-spacing:0.900px;"><span style="color:#41ad58">49</span>  x  <span style="color:#e0494c;margin-left:1.3px">7</span></span>
<span style="left:27.50px;top:631.00px;font:400 11px/11px 'Liberation Sans', sans-serif;color:#ececec;letter-spacing:0.939px;">4 241,00</span>
<span style="left:105.60px;top:631.00px;font:400 11px/11px 'Liberation Sans', sans-serif;color:#ececec;letter-spacing:0.900px;">120</span>
<span style="left:290.40px;top:628.00px;font:700 15px/15px 'Liberation Sans', sans-serif;color:#e04848;">-1</span>
<span style="left:311.10px;top:628.00px;font:700 15px/15px 'Liberation Sans', sans-serif;color:#f0f0f0;">x</span>
<span style="left:326.00px;top:628.00px;font:700 15px/15px 'Liberation Sans', sans-serif;color:#f0f0f0;"> 0</span>
<span style="left:420.00px;top:631.00px;font:400 11px/11px 'Liberation Sans', sans-serif;color:#e4e4e4;letter-spacing:0.900px;">268  x 0</span>
<span style="left:539.30px;top:631.00px;font:400 11px/11px 'Liberation Sans', sans-serif;color:#e4e4e4;letter-spacing:0.900px;"><span style="color:#e0494c">120</span>  x  <span style="color:#e4e4e4;margin-left:1.3px">0</span></span>
<span style="left:27.50px;top:652.00px;font:400 11px/11px 'Liberation Sans', sans-serif;color:#ececec;letter-spacing:0.939px;">4 240,75</span>
<span style="left:105.60px;top:652.00px;font:400 11px/11px 'Liberation Sans', sans-serif;color:#ececec;letter-spacing:0.900px;">89</span>
<span style="left:290.40px;top:649.00px;font:700 15px/15px 'Liberation Sans', sans-serif;color:#e04848;">-2</span>
<span style="left:311.10px;top:649.00px;font:700 15px/15px 'Liberation Sans', sans-serif;color:#f0f0f0;">x</span>
<span style="left:326.00px;top:649.00px;font:700 15px/15px 'Liberation Sans', sans-serif;color:#f0f0f0;"> 0</span>
<span style="left:420.00px;top:652.00px;font:400 11px/11px 'Liberation Sans', sans-serif;color:#e4e4e4;letter-spacing:0.900px;">113  x 0</span>
<span style="left:539.30px;top:652.00px;font:400 11px/11px 'Liberation Sans', sans-serif;color:#e4e4e4;letter-spacing:0.900px;"><span style="color:#e0494c">89</span>  x  <span style="color:#e4e4e4;margin-left:1.3px">0</span></span>
<span style="left:27.50px;top:673.00px;font:400 11px/11px 'Liberation Sans', sans-serif;color:#ececec;letter-spacing:0.939px;">4 240,50</span>
<span style="left:105.60px;top:673.00px;font:400 11px/11px 'Liberation Sans', sans-serif;color:#ececec;letter-spacing:0.900px;">40</span>
<span style="left:290.40px;top:670.00px;font:700 15px/15px 'Liberation Sans', sans-serif;color:#e04848;">-6</span>
<span style="left:311.10px;top:670.00px;font:700 15px/15px 'Liberation Sans', sans-serif;color:#f0f0f0;">x</span>
<span style="left:326.00px;top:670.00px;font:700 15px/15px 'Liberation Sans', sans-serif;color:#f0f0f0;"> 0</span>
<span style="left:420.00px;top:673.00px;font:400 11px/11px 'Liberation Sans', sans-serif;color:#e4e4e4;letter-spacing:0.900px;">103  x 0</span>
<span style="left:539.30px;top:673.00px;font:400 11px/11px 'Liberation Sans', sans-serif;color:#e4e4e4;letter-spacing:0.900px;"><span style="color:#e0494c">40</span>  x  <span style="color:#e4e4e4;margin-left:1.3px">0</span></span>
<span style="left:174.00px;top:692.00px;font:400 11px/11px 'Liberation Sans', sans-serif;color:#e4e4e4;letter-spacing:0.874px;">11 221</span>
</section>
<section class="g" id="position-panel">
<div style="left:4px;top:710px;width:663px;height:26px;background:#222d3a;"></div>
<div style="left:169px;top:711px;width:1px;height:24px;background:#2a3441;"></div>
<div style="left:335px;top:711px;width:1px;height:24px;background:#2a3441;"></div>
<div style="left:501px;top:711px;width:1px;height:24px;background:#2a3441;"></div>
<div style="left:80px;top:727px;width:4px;height:2px;background:#ece4dc;"></div>
<div style="left:85px;top:727px;width:4px;height:2px;background:#ece4dc;"></div>
<div style="left:90px;top:727px;width:4px;height:2px;background:#ece4dc;"></div>
<div style="left:246px;top:727px;width:4px;height:2px;background:#ece4dc;"></div>
<div style="left:251px;top:727px;width:4px;height:2px;background:#ece4dc;"></div>
<div style="left:256px;top:727px;width:4px;height:2px;background:#ece4dc;"></div>
<div style="left:412px;top:727px;width:4px;height:2px;background:#ece4dc;"></div>
<div style="left:417px;top:727px;width:4px;height:2px;background:#ece4dc;"></div>
<div style="left:422px;top:727px;width:4px;height:2px;background:#ece4dc;"></div>
<div style="left:578px;top:727px;width:4px;height:2px;background:#ece4dc;"></div>
<div style="left:583px;top:727px;width:4px;height:2px;background:#ece4dc;"></div>
<div style="left:588px;top:727px;width:4px;height:2px;background:#ece4dc;"></div>
<span style="left:47.90px;top:711.00px;font:400 9.5px/9.5px 'Liberation Sans', sans-serif;color:#888a8e;letter-spacing:-0.248px;">Average open price</span>
<span style="left:235.85px;top:711.00px;font:400 9.5px/9.5px 'Liberation Sans', sans-serif;color:#888a8e;letter-spacing:-0.242px;">Quantity</span>
<span style="left:382.65px;top:711.00px;font:400 9.5px/9.5px 'Liberation Sans', sans-serif;color:#888a8e;letter-spacing:-0.324px;">Gross Profit / Loss</span>
<span style="left:551.75px;top:711.00px;font:400 9.5px/9.5px 'Liberation Sans', sans-serif;color:#888a8e;letter-spacing:-0.218px;">Liquidation price</span>
</section>
<section class="g" id="context-menu">
<div style="left:622px;top:119px;width:220px;height:488px;background:#9f6135;box-shadow:0.5px 0.5px 4px rgba(0,0,0,0.6);"></div>
<div style="left:622px;top:177px;width:220px;height:1px;background:#cb8858;"></div>
<div style="left:622px;top:212px;width:220px;height:1px;background:#cb8858;"></div>
<div style="left:622px;top:290px;width:220px;height:24px;background:#cc8755;"></div>
<div style="left:627px;top:295px;width:14px;height:14px;background:#9f6135;border-radius:3px;"></div>
<svg style="left:627px;top:247px" width="14" height="14" viewBox="0 0 14 14"><path d="M2.4 6.9L5.7 10.5L11.5 1.8" stroke="#fff" stroke-width="2.2" fill="none"/></svg>
<svg style="left:627px;top:271px" width="14" height="14" viewBox="0 0 14 14"><path d="M2.4 6.9L5.7 10.5L11.5 1.8" stroke="#fff" stroke-width="2.2" fill="none"/></svg>
<svg style="left:627px;top:295px" width="14" height="14" viewBox="0 0 14 14"><path d="M2.4 6.9L5.7 10.5L11.5 1.8" stroke="#fff" stroke-width="2.2" fill="none"/></svg>
<svg style="left:627px;top:319px" width="14" height="14" viewBox="0 0 14 14"><path d="M2.4 6.9L5.7 10.5L11.5 1.8" stroke="#fff" stroke-width="2.2" fill="none"/></svg>
<svg style="left:627px;top:343px" width="14" height="14" viewBox="0 0 14 14"><path d="M2.4 6.9L5.7 10.5L11.5 1.8" stroke="#fff" stroke-width="2.2" fill="none"/></svg>
<span style="left:646.50px;top:129.60px;font:400 12px/12px 'Liberation Sans', sans-serif;color:#fbf3ec;letter-spacing:0.279px;-webkit-text-stroke:0.35px #fbf3ec;">Fit column width to content</span>
<span style="left:646.50px;top:153.60px;font:400 12px/12px 'Liberation Sans', sans-serif;color:#fbf3ec;letter-spacing:0.223px;-webkit-text-stroke:0.35px #fbf3ec;">Fit all columns width to content</span>
<span style="left:646.50px;top:188.60px;font:400 12px/12px 'Liberation Sans', sans-serif;color:#fbf3ec;letter-spacing:-0.240px;-webkit-text-stroke:0.35px #fbf3ec;">Reset</span>
<span style="left:646.50px;top:223.60px;font:400 12px/12px 'Liberation Sans', sans-serif;color:#fbf3ec;letter-spacing:0.067px;-webkit-text-stroke:0.35px #fbf3ec;">Buy/Sell</span>
<span style="left:646.50px;top:247.60px;font:400 12px/12px 'Liberation Sans', sans-serif;color:#fbf3ec;letter-spacing:-0.261px;-webkit-text-stroke:0.35px #fbf3ec;">Price</span>
<span style="left:646.50px;top:271.60px;font:400 12px/12px 'Liberation Sans', sans-serif;color:#fbf3ec;letter-spacing:-0.173px;-webkit-text-stroke:0.35px #fbf3ec;">Bids/Asks</span>
<span style="left:646.50px;top:295.60px;font:400 12px/12px 'Liberation Sans', sans-serif;color:#fbf3ec;letter-spacing:0.060px;-webkit-text-stroke:0.35px #fbf3ec;">Liquidity changes</span>
<span style="left:646.50px;top:319.60px;font:400 12px/12px 'Liberation Sans', sans-serif;color:#fbf3ec;letter-spacing:0.029px;-webkit-text-stroke:0.35px #fbf3ec;">Number of changes</span>
<span style="left:646.50px;top:343.60px;font:400 12px/12px 'Liberation Sans', sans-serif;color:#fbf3ec;letter-spacing:-0.049px;-webkit-text-stroke:0.35px #fbf3ec;">Cumulative changes</span>
<span style="left:646.50px;top:367.60px;font:400 12px/12px 'Liberation Sans', sans-serif;color:#fbf3ec;letter-spacing:0.026px;-webkit-text-stroke:0.35px #fbf3ec;">Comments</span>
<span style="left:646.50px;top:391.60px;font:400 12px/12px 'Liberation Sans', sans-serif;color:#fbf3ec;letter-spacing:-0.039px;-webkit-text-stroke:0.35px #fbf3ec;">Last trade size</span>
<span style="left:646.50px;top:415.60px;font:400 12px/12px 'Liberation Sans', sans-serif;color:#fbf3ec;-webkit-text-stroke:0.35px #fbf3ec;">Bid trade size</span>
<span style="left:646.50px;top:439.60px;font:400 12px/12px 'Liberation Sans', sans-serif;color:#fbf3ec;letter-spacing:-0.067px;-webkit-text-stroke:0.35px #fbf3ec;">Ask trade size</span>
<span style="left:646.50px;top:463.60px;font:400 12px/12px 'Liberation Sans', sans-serif;color:#fbf3ec;letter-spacing:-0.079px;-webkit-text-stroke:0.35px #fbf3ec;">Cumulative size</span>
<span style="left:646.50px;top:487.60px;font:400 12px/12px 'Liberation Sans', sans-serif;color:#fbf3ec;letter-spacing:-0.164px;-webkit-text-stroke:0.35px #fbf3ec;">Imbalance, %</span>
<span style="left:646.50px;top:511.60px;font:400 12px/12px 'Liberation Sans', sans-serif;color:#fbf3ec;letter-spacing:0.031px;-webkit-text-stroke:0.35px #fbf3ec;">Profit &amp; Loss</span>
<span style="left:646.50px;top:535.60px;font:400 12px/12px 'Liberation Sans', sans-serif;color:#fbf3ec;letter-spacing:0.134px;-webkit-text-stroke:0.35px #fbf3ec;">Volume</span>
<span style="left:646.50px;top:559.60px;font:400 12px/12px 'Liberation Sans', sans-serif;color:#fbf3ec;letter-spacing:-0.261px;-webkit-text-stroke:0.35px #fbf3ec;">Trades</span>
<span style="left:646.50px;top:583.60px;font:400 12px/12px 'Liberation Sans', sans-serif;color:#fbf3ec;letter-spacing:0.271px;-webkit-text-stroke:0.35px #fbf3ec;">Delta</span>
</section>
</body></html>
